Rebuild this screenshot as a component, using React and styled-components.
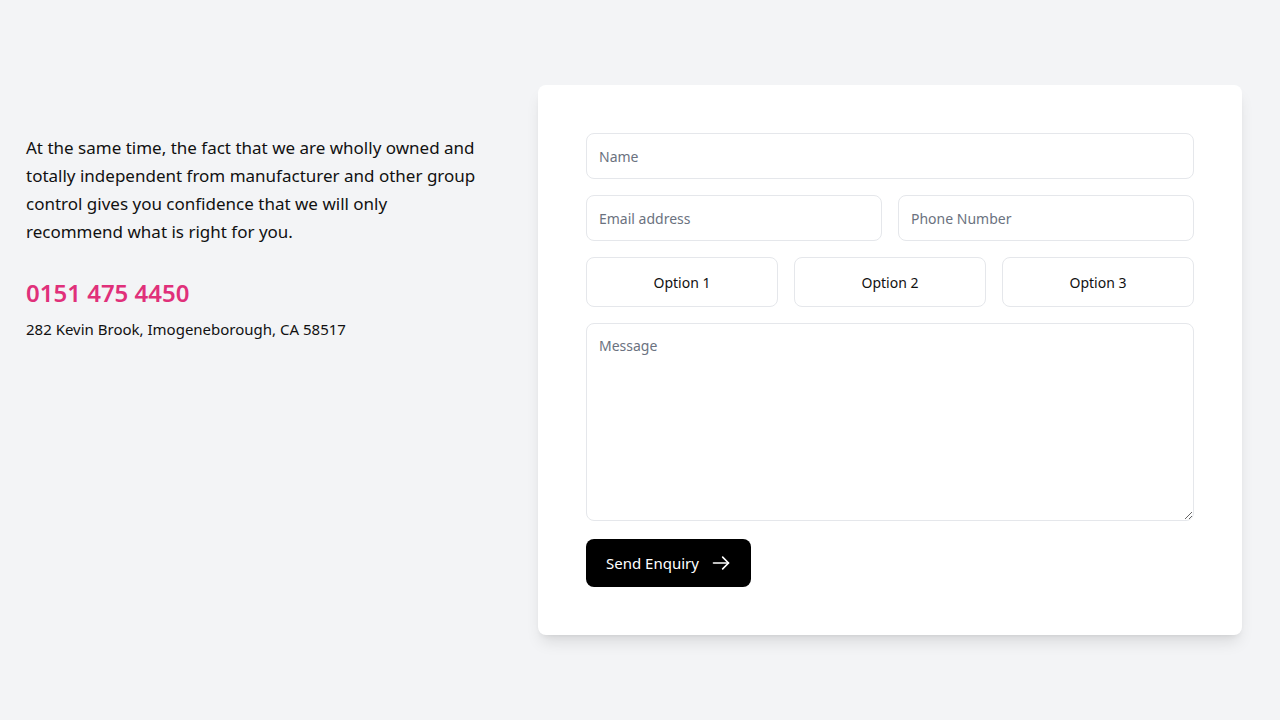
import React from "react";
import styled, { createGlobalStyle } from "styled-components";

const Global = createGlobalStyle`
  * { box-sizing: border-box; }
  html, body { margin: 0; padding: 0; background: #f3f4f6; }
  body { font-family: "Noto Sans", sans-serif; color: #111; }
`;

const Page = styled.div`
  min-height: 720px;
  display: grid;
  grid-template-columns: 464px 704px;
  column-gap: 48px;
  align-items: center;
  padding: 0 38px 0 26px;
`;

const Info = styled.div`
  align-self: start;
  padding-top: 134px;
  max-width: 455px;
`;

const Para = styled.p`
  margin: 0;
  font-size: 17px;
  line-height: 28px;
  color: #111;
`;

const Phone = styled.div`
  margin-top: 31px;
  font-size: 24px;
  font-weight: 600;
  color: #e0307a;
  line-height: 32px;
`;

const Address = styled.div`
  margin-top: 8px;
  font-size: 15px;
  line-height: 24px;
  color: #111;
`;

const Card = styled.form`
  background: #fff;
  border-radius: 8px;
  box-shadow: 0 10px 15px -3px rgba(0,0,0,0.1), 0 4px 6px -4px rgba(0,0,0,0.1);
  padding: 48px;
  display: flex;
  flex-direction: column;
  gap: 16px;
`;

const Row = styled.div`
  display: grid;
  grid-template-columns: repeat(${p => p.$cols}, 1fr);
  gap: 16px;
`;

const Input = styled.input`
  height: 46px;
  width: 100%;
  border: 1px solid #e5e7eb;
  border-radius: 8px;
  padding: 0 12px;
  font-family: inherit;
  font-size: 14px;
  color: #111;
  background: #fff;
  outline: none;
  &::placeholder { color: #6b7280; }
`;

const Option = styled.button`
  height: 50px;
  border: 1px solid #e5e7eb;
  border-radius: 8px;
  background: #fff;
  font-family: inherit;
  font-size: 14px;
  color: #111;
  cursor: pointer;
`;

const Message = styled.textarea`
  height: 198px;
  width: 100%;
  border: 1px solid #e5e7eb;
  border-radius: 8px;
  padding: 12px;
  font-family: inherit;
  font-size: 14px;
  line-height: 20px;
  resize: vertical;
  outline: none;
  display: block;
  &::placeholder { color: #6b7280; }
`;

const Submit = styled.button`
  margin-top: 2px;
  align-self: flex-start;
  height: 48px;
  padding: 0 20px;
  display: inline-flex;
  align-items: center;
  gap: 12px;
  background: #000;
  color: #fff;
  border: none;
  border-radius: 8px;
  font-family: inherit;
  font-size: 15px;
  cursor: pointer;
`;

const Arrow = () => (
  <svg width="20" height="20" viewBox="0 0 24 24" fill="none" stroke="currentColor" strokeWidth="2" strokeLinecap="round" strokeLinejoin="round">
    <path d="M3 12h18" />
    <path d="M14 5l7 7-7 7" />
  </svg>
);

export default function App() {
  return (
    <>
      <Global />
      <Page>
        <Info>
          <Para>
            At the same time, the fact that we are wholly owned and totally independent from manufacturer and other group control gives you confidence that we will only recommend what is right for you.
          </Para>
          <Phone>0151 475 4450</Phone>
          <Address>282 Kevin Brook, Imogeneborough, CA 58517</Address>
        </Info>
        <Card onSubmit={e => e.preventDefault()}>
          <Input placeholder="Name" />
          <Row $cols={2}>
            <Input placeholder="Email address" />
            <Input placeholder="Phone Number" />
          </Row>
          <Row $cols={3}>
            <Option type="button">Option 1</Option>
            <Option type="button">Option 2</Option>
            <Option type="button">Option 3</Option>
          </Row>
          <Message placeholder="Message" />
          <Submit type="submit">Send Enquiry <Arrow /></Submit>
        </Card>
      </Page>
    </>
  );
}
